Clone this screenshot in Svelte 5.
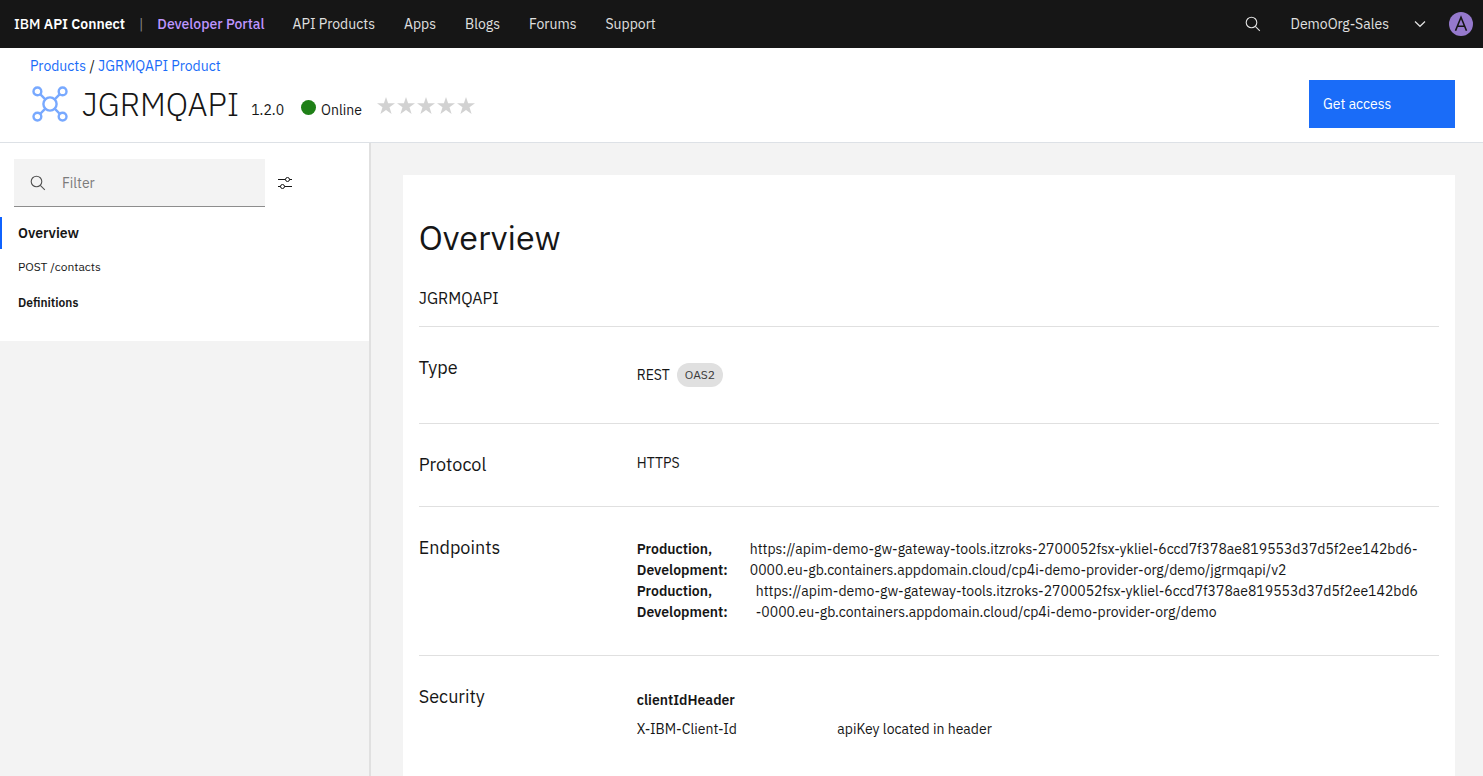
<script>
  const nav = ['API Products', 'Apps', 'Blogs', 'Forums', 'Support'];
  const host = 'https://apim-demo-gw-gateway-tools.itzroks-2700052fsx-ykliel-6ccd7f378ae819553d37d5f2ee142bd6';
  const rest = '0000.eu-gb.containers.appdomain.cloud/cp4i-demo-provider-org/demo';
  const endpoints = [
    { lines: [host + '-', rest + '/jgrmqapi/v2'] },
    { lines: [host, '-' + rest], inset: true },
  ];
</script>

{#snippet searchIcon()}
  <svg width="16" height="16" viewBox="0 0 16 16" fill="none" stroke="currentColor" stroke-width="1.1" aria-hidden="true">
    <circle cx="6.5" cy="6.5" r="5.3" />
    <path d="M10.3 10.3 14.8 14.8" />
  </svg>
{/snippet}

<div class="page">
  <header class="top">
    <a class="brand" href="#home"><span>IBM</span> API Connect</a>
    <span class="bar">|</span>
    <a class="portal" href="#portal">Developer Portal</a>
    <nav aria-label="Main">
      {#each nav as item}<a href="#{item}">{item}</a>{/each}
    </nav>
    <div class="tools">
      <button class="search" aria-label="Search">{@render searchIcon()}</button>
      <button class="org">
        <span>DemoOrg-Sales</span>
        <svg width="12" height="12" viewBox="0 0 12 12" fill="none" stroke="currentColor" stroke-width="1.2" aria-hidden="true"><path d="M1 3.5 6 8.3 11 3.5" /></svg>
      </button>
      <button class="avatar" aria-label="Account">
        <svg width="24" height="24" viewBox="0 0 24 24" fill="none" aria-hidden="true">
          <circle cx="12" cy="12" r="12" fill="#9579cc" />
          <path d="M6.5 18.7 12 5.3 17.5 18.7M8.3 14.3H15.7" stroke="#161616" stroke-width="1.6" />
        </svg>
      </button>
    </div>
  </header>

  <section class="product">
    <div>
      <div class="crumbs"><a href="#products">Products</a> / <a href="#product">JGRMQAPI Product</a></div>
      <div class="title">
        <svg width="36" height="36" viewBox="0 0 36 36" fill="none" stroke="#78a9ff" stroke-width="2.4" aria-hidden="true">
          <circle cx="18" cy="18" r="6.6" />
          <circle cx="5.4" cy="5.4" r="3.9" /><circle cx="30.6" cy="5.4" r="3.9" />
          <circle cx="5.4" cy="30.6" r="3.9" /><circle cx="30.6" cy="30.6" r="3.9" />
          <path d="M8.2 8.2 13.3 13.3M27.8 8.2 22.7 13.3M8.2 27.8 13.3 22.7M27.8 27.8 22.7 22.7" />
        </svg>
        <h1>JGRMQAPI</h1>
        <span class="version">1.2.0</span>
        <span class="status"><i class="dot"></i>Online</span>
        <span class="stars" role="img" aria-label="Not rated">
          {#each Array(5) as _}
            <svg width="18" height="17" viewBox="0 0 18 17" aria-hidden="true"><path fill="#d2d2d2" d="M9 0 11.1 6.3H18L12.5 10.3 14.6 17 9 12.9 3.4 17 5.5 10.3 0 6.3H6.9Z" /></svg>
          {/each}
        </span>
      </div>
    </div>
    <button class="access">Get access</button>
  </section>

  <div class="body">
    <aside>
      <div class="panel">
        <div class="filter-row">
          <label class="filter">
            {@render searchIcon()}
            <input type="text" placeholder="Filter" aria-label="Filter" />
          </label>
          <button aria-label="Filter settings">
            <svg width="14" height="14" viewBox="0 0 14 14" fill="none" stroke="#161616" aria-hidden="true">
              <path d="M0 3.5H7.5M11.5 3.5H14M0 10.5H2.5M6.5 10.5H14" />
              <circle cx="9.5" cy="3.5" r="2" /><circle cx="4.5" cy="10.5" r="2" />
            </svg>
          </button>
        </div>
        <nav class="side" aria-label="API">
          <a class="current" href="#overview">Overview</a>
          <a href="#contacts">POST /contacts</a>
          <a class="strong" href="#definitions">Definitions</a>
        </nav>
      </div>
    </aside>

    <main>
      <article>
        <h2>Overview</h2>
        <p class="name">JGRMQAPI</p>
        <section class="row">
          <h3>Type</h3>
          <div class="type">REST <span class="tag">OAS2</span></div>
        </section>
        <section class="row">
          <h3>Protocol</h3>
          <div class="protocol">HTTPS</div>
        </section>
        <section class="row">
          <h3>Endpoints</h3>
          <div class="endpoints">
            {#each endpoints as e}
              <div class="endpoint" class:inset={e.inset}>
                <strong>Production,<br />Development:</strong>
                <span>{e.lines[0]}<br />{e.lines[1]}</span>
              </div>
            {/each}
          </div>
        </section>
        <section class="row">
          <h3>Security</h3>
          <div class="security">
            <strong>clientIdHeader</strong>
            <div class="key"><span>X-IBM-Client-Id</span><span>apiKey located in header</span></div>
          </div>
        </section>
      </article>
    </main>
  </div>
</div>

<style>
  :global(body) { margin: 0; }
  :global(*) { box-sizing: border-box; }
  .page {
    height: 100vh;
    overflow: hidden;
    display: flex;
    flex-direction: column;
    background: #f3f3f3;
    color: #161616;
    font: 14px/21px "IBM Plex Sans", Roboto, sans-serif;
  }
  a { text-decoration: none; color: inherit; }
  button { font: inherit; color: inherit; border: 0; background: none; padding: 0; cursor: pointer; }
  svg { display: block; flex: none; }
  h1, h2, h3, p { margin: 0; font-weight: 400; }
  strong { font-weight: 600; }

  .top { flex: none; height: 48px; display: flex; align-items: center; padding: 0 10px 0 14px; background: #161616; color: #e0e0e0; white-space: nowrap; }
  .brand { color: #fff; font-weight: 600; }
  .brand span { font-weight: 500; }
  .bar { color: #8d8d8d; margin: 0 14px; }
  .portal { color: #be95ff; font-weight: 500; }
  .top nav { display: flex; gap: 29px; margin-left: 28px; }
  .tools { margin-left: auto; display: flex; align-items: center; }
  .search { margin-right: 30px; }
  .org { display: flex; align-items: center; gap: 25px; margin-right: 23px; }

  .product { flex: none; display: flex; justify-content: space-between; align-items: flex-end; padding: 8px 28px 14px 30px; background: #fff; border-bottom: 1px solid #dde1e6; }
  .crumbs { line-height: 20px; }
  .crumbs a { color: #1a6cf8; }
  .title { display: flex; align-items: center; padding: 6px 0 2px 2px; height: 52px; }
  h1 { font-size: 32px; line-height: 40px; font-weight: 300; margin-left: 14px; }
  .version { margin: 12px 17px 0 12px; }
  .status { display: flex; align-items: center; gap: 5px; margin: 12px 15px 0 0; }
  .dot { width: 15px; height: 15px; border-radius: 50%; background: #1f8017; margin-bottom: 6px; }
  .stars { display: flex; gap: 2px; margin-top: 2px; }
  .access { width: 146px; height: 48px; padding: 0 14px; background: #1a6cf8; color: #fff; text-align: left; }

  .body { flex: 1; min-height: 0; display: flex; }
  aside { flex: none; width: 25%; border-right: 2px solid #e0e0e0; }
  .panel { background: #fff; padding: 16px 0 20px; }
  .filter-row { display: flex; align-items: center; gap: 13px; padding: 0 77px 0 14px; }
  .filter { flex: 1; height: 48px; display: flex; align-items: center; gap: 16px; padding: 0 16px; background: #f3f3f3; border-bottom: 1px solid #8d8d8d; color: #525252; }
  .filter input { flex: 1; min-width: 0; border: 0; padding: 2px 0 0; background: none; font: inherit; color: #161616; outline: 0; }
  .filter input::placeholder { color: #7b7b7b; opacity: 1; }
  .side { display: flex; flex-direction: column; margin-top: 10px; font-size: 12px; }
  .side a { height: 36px; line-height: 36px; padding-left: 18px; }
  .side .current { height: 32px; line-height: 32px; padding-left: 16px; border-left: 2px solid #0f62fe; font-size: 14px; font-weight: 600; }
  .side .strong { font-weight: 600; }

  main { flex: 1; min-width: 0; padding: 32px 28px 0 32px; display: flex; }
  article { flex: 1; min-width: 0; background: #fff; padding: 38px 16px 0; }
  h2 { font-size: 34px; line-height: 48px; }
  .name { font-size: 16px; line-height: 24px; padding: 25px 0 16px; }
  .row { display: grid; grid-template-columns: 218px minmax(0, 1fr); border-top: 1px solid #e0e0e0; padding: 28px 0; }
  h3 { font-size: 18px; line-height: 26px; }
  .type { display: flex; align-items: center; gap: 7px; padding: 8px 0; }
  .tag { height: 24px; line-height: 24px; padding: 0 8px; border-radius: 12px; background: #e0e0e0; color: #393939; font-size: 12px; }
  .protocol { padding-top: 1px; }
  .endpoints { padding: 4px 0; }
  .endpoint { display: grid; grid-template-columns: 113px minmax(0, 1fr); white-space: nowrap; }
  .inset { grid-template-columns: 119px minmax(0, 1fr); }
  .security { padding-top: 6px; display: flex; flex-direction: column; gap: 8px; }
  .key { display: grid; grid-template-columns: 1fr 3fr; }
</style>
